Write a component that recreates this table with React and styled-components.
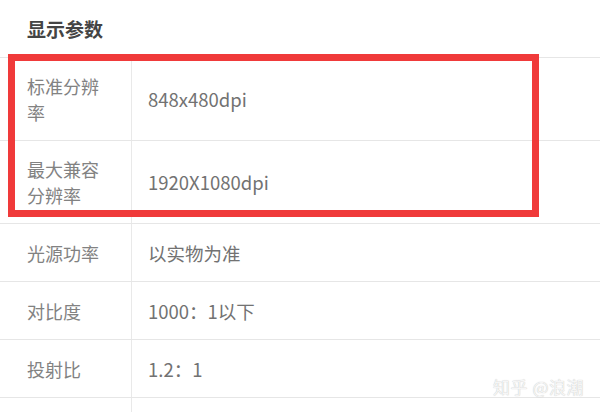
import React from "react";
import styled, { createGlobalStyle } from "styled-components";

const Global = createGlobalStyle`
  html, body { margin: 0; padding: 0; background: #fff; }
  body { font-family: "Noto Sans CJK SC", "Noto Sans", sans-serif; overflow: hidden; }
`;

const Page = styled.div`
  position: relative;
  width: 600px;
  height: 412px;
  overflow: hidden;
  background: #fff;
`;

const Title = styled.h2`
  margin: 0;
  height: 57px;
  display: flex;
  align-items: center;
  padding-left: 27px;
  font-size: 19px;
  font-weight: 700;
  color: #444;
  box-sizing: border-box;
`;

const Table = styled.div`
  border-top: 1px solid #e6e6e6;
`;

const Highlight = styled.div`
  position: relative;
  &::after {
    content: "";
    position: absolute;
    left: 8px;
    top: -4px;
    width: 531px;
    height: 163px;
    box-sizing: border-box;
    border: 7px solid #f03a3a;
    pointer-events: none;
  }
`;

const Row = styled.div`
  display: grid;
  grid-template-columns: 132px 1fr;
  min-height: 58px;
  border-bottom: 1px solid #e6e6e6;
  box-sizing: border-box;
`;

const Label = styled.div`
  display: flex;
  align-items: center;
  padding: 15px 22px 15px 27px;
  border-right: 1px solid #e9e9e9;
  font-size: 18px;
  line-height: 26px;
  color: #828282;
  box-sizing: border-box;
`;

const Value = styled.div`
  display: flex;
  align-items: center;
  padding: 15px 16px;
  font-size: 18.5px;
  line-height: 26px;
  color: #727272;
`;

const Watermark = styled.div`
  position: absolute;
  right: 16px;
  bottom: 15px;
  font-size: 17px;
  line-height: 20px;
  color: #f6f6f6;
  text-shadow: 0 0 1px #b8b8b8;
  letter-spacing: 0.5px;
`;

const highlighted = [
  ["标准分辨率", "848x480dpi"],
  ["最大兼容分辨率", "1920X1080dpi"],
];

const rows = [
  ["光源功率", "以实物为准"],
  ["对比度", "1000：1以下"],
  ["投射比", "1.2：1"],
  ["", ""],
];

export default function App() {
  return (
    <Page>
      <Global />
      <Title>显示参数</Title>
      <Table>
        <Highlight>
          {highlighted.map(([l, v]) => (
            <Row key={l}>
              <Label>{l}</Label>
              <Value>{v}</Value>
            </Row>
          ))}
        </Highlight>
        {rows.map(([l, v], i) => (
          <Row key={i}>
            <Label>{l}</Label>
            <Value>{v}</Value>
          </Row>
        ))}
      </Table>
      <Watermark>知乎 @浪潮</Watermark>
    </Page>
  );
}
